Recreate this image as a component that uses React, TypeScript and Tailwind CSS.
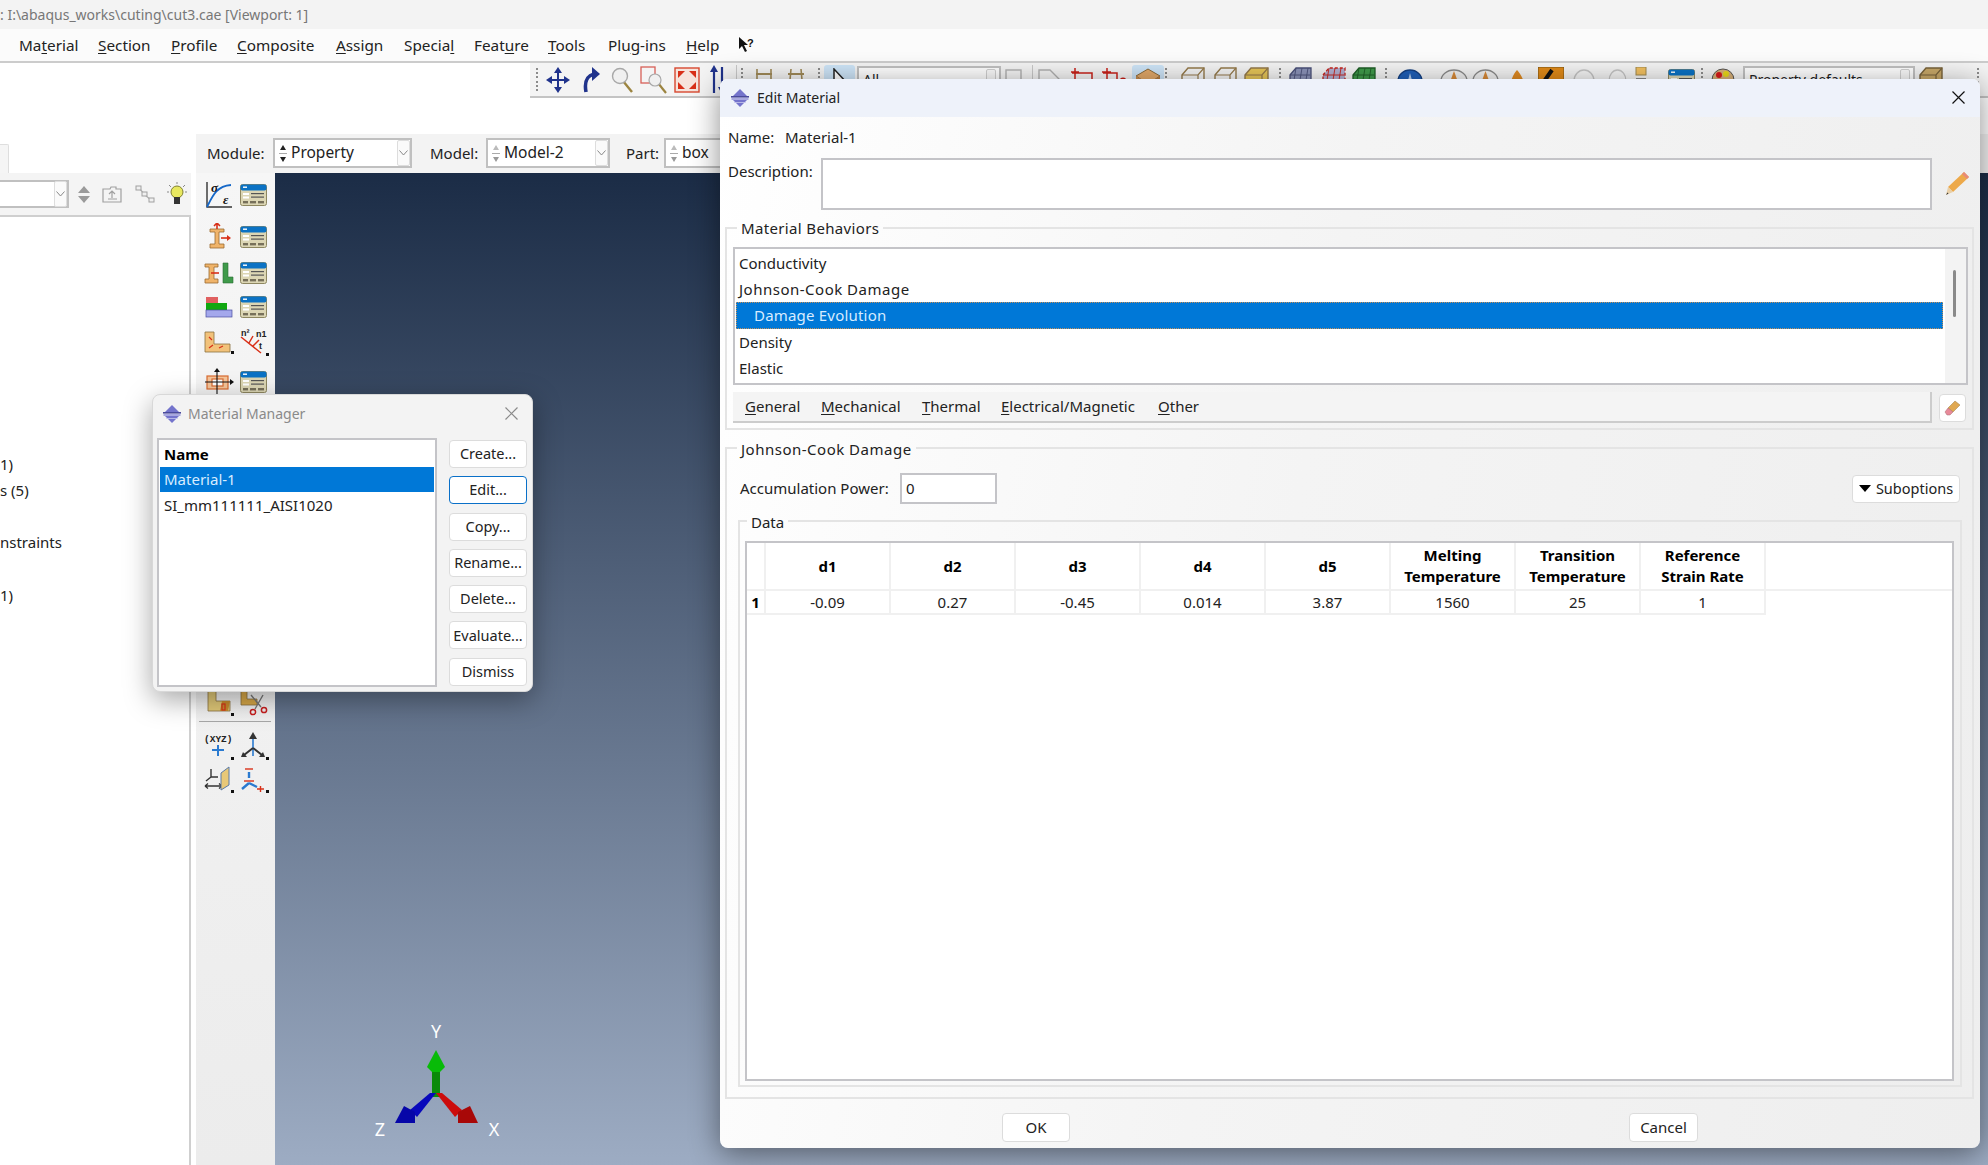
import React from 'react';

const Svg: React.FC<{ w: number; h: number; className?: string; children: React.ReactNode }> = ({ w, h, className, children }) => (
  <svg width={w} height={h} viewBox={`0 0 ${w} ${h}`} className={`shrink-0 ${className ?? ''}`}>
    {children}
  </svg>
);

const Grip: React.FC<{ className?: string }> = ({ className }) => (
  <div className={`flex h-[24px] w-[2px] shrink-0 flex-col justify-between ${className ?? ''}`}>
    {[0, 1, 2, 3, 4, 5].map((i) => (
      <span key={i} className="h-[2px] w-[2px] bg-[#8c8c8c]" />
    ))}
  </div>
);

const Divider: React.FC<{ className?: string }> = ({ className }) => (
  <div className={`h-[30px] w-px shrink-0 bg-[#c8c8c8] ${className ?? ''}`} />
);

const AbaqusIcon: React.FC = () => (
  <Svg w={18} h={18}>
    <polygon points="9,0 16,7 2,7" fill="#7474cc" />
    <polygon points="2,11 16,11 9,18" fill="#7474cc" />
    <rect x="0" y="7" width="18" height="1.6" fill="#4a4a9c" />
    <rect x="0.5" y="9" width="17" height="2" fill="#a8a8e0" />
    <rect x="3" y="13" width="12" height="0.8" fill="#c8c8ee" />
  </Svg>
);

const TableIcon: React.FC = () => (
  <Svg w={27} h={22}>
    <rect x="0.5" y="0.5" width="26" height="21" rx="2" fill="#dcd6b4" stroke="#8e8760" />
    <rect x="0.5" y="0.5" width="26" height="6" rx="2" fill="#0b72c4" />
    <rect x="3" y="2.5" width="4" height="1.4" fill="#fff" />
    <rect x="3" y="9" width="6" height="2" fill="#fff" />
    <rect x="11" y="9" width="13" height="1.2" fill="#555" />
    <rect x="3" y="12.5" width="6" height="2" fill="#fff" />
    <rect x="11" y="12.5" width="13" height="1.2" fill="#555" />
    <rect x="3" y="17" width="5" height="2.4" fill="#77705a" />
    <rect x="10" y="17" width="6" height="2.4" fill="#77705a" />
    <rect x="18" y="17" width="6" height="2.4" fill="#77705a" />
  </Svg>
);

const StressIcon: React.FC = () => (
  <Svg w={28} h={28}>
    <path d="M2 1 V26 H27" fill="none" stroke="#333" strokeWidth="1.4" />
    <path d="M2 26 C8 14 12 5 26 4" fill="none" stroke="#1668c8" strokeWidth="1.8" />
    <text x="6" y="11" fontSize="13" fontStyle="italic" fontWeight="700" fill="#111" fontFamily="Liberation Serif, serif">σ</text>
    <text x="18" y="23" fontSize="13" fontStyle="italic" fontWeight="700" fill="#111" fontFamily="Liberation Serif, serif">ε</text>
  </Svg>
);

const BeamArrowIcon: React.FC = () => (
  <Svg w={24} h={28}>
    <path d="M3 6 H17 V9 H12 V21 H17 V25 H3 V21 H8 V9 H3 Z" fill="#f0b46a" stroke="#9a6a30" strokeWidth="0.8" />
    <path d="M10 0 V6 M7 3 L10 0 L13 3" fill="none" stroke="#d83018" strokeWidth="1.6" />
    <path d="M14 15 H21" stroke="#d83018" strokeWidth="1.6" />
    <polygon points="24,15 20,12 20,18" fill="#d83018" />
  </Svg>
);

const BeamLIcon: React.FC = () => (
  <Svg w={30} h={24}>
    <path d="M1 3 H14 V6 H10 V18 H14 V22 H1 V18 H5 V6 H1 Z" fill="#f0b46a" stroke="#9a6a30" strokeWidth="0.8" />
    <path d="M7 12 H15" stroke="#d83018" strokeWidth="1.6" />
    <path d="M19 2 H24 V16 H29 V22 H19 Z" fill="#3f9a4a" stroke="#2a6c32" strokeWidth="0.6" />
  </Svg>
);

const LayersIcon: React.FC = () => (
  <Svg w={28} h={22}>
    <rect x="1" y="1" width="12" height="6" fill="#e06060" />
    <rect x="1" y="7" width="21" height="7" fill="#10a810" />
    <rect x="1" y="14" width="26" height="7" fill="#a4a8ec" stroke="#4a4ea0" strokeWidth="0.7" />
  </Svg>
);

const CornerIcon: React.FC = () => (
  <Svg w={30} h={24}>
    <path d="M1 2 H10 V14 H26 V22 H1 Z" fill="#f2c27a" stroke="#8b7240" strokeWidth="0.8" />
    <path d="M5 7 L8 10 M5 18 L9 15 M15 18 L19 16" stroke="#d83018" strokeWidth="1.2" />
    <rect x="27" y="21" width="3" height="3" fill="#111" />
  </Svg>
);

const NormalsIcon: React.FC = () => (
  <Svg w={30} h={28}>
    <text x="2" y="8" fontSize="9" fontWeight="700" fill="#222" fontFamily="Liberation Sans, sans-serif">n²</text>
    <text x="17" y="9" fontSize="9" fontWeight="700" fill="#222" fontFamily="Liberation Sans, sans-serif">n1</text>
    <path d="M2 9 L22 25 M10 15 L14 8 M14 18 L20 12" stroke="#d83018" strokeWidth="1.5" />
    <text x="20" y="21" fontSize="9" fontWeight="700" fill="#222" fontFamily="Liberation Sans, sans-serif">t</text>
    <rect x="27" y="25" width="3" height="3" fill="#111" />
  </Svg>
);

const CrossSectionIcon: React.FC = () => (
  <Svg w={30} h={28}>
    <rect x="3" y="8" width="21" height="13" fill="#f6c59a" stroke="#d86a30" strokeWidth="1.2" />
    <rect x="8" y="11" width="11" height="7" fill="#fff" stroke="#d86a30" strokeWidth="1.2" />
    <path d="M13 3 V27 M1 14 H27" stroke="#111" strokeWidth="1.1" />
    <polygon points="13,0 10,4 16,4" fill="#111" />
    <polygon points="30,14 26,11 26,17" fill="#111" />
  </Svg>
);

const AssignCutIcon: React.FC = () => (
  <Svg w={30} h={28}>
    <path d="M4 0 H12 V12 H26 V22 H4 Z" fill="#e0c878" stroke="#8b7240" strokeWidth="0.8" />
    <path d="M18 12 L26 12 L24 22 L16 22 Z" fill="#c88a2c" />
    <rect x="18" y="15" width="3" height="6" fill="none" stroke="#d83018" strokeWidth="1.2" />
    <rect x="27" y="24" width="3" height="3" fill="#111" />
  </Svg>
);

const ScissorsIcon: React.FC = () => (
  <Svg w={30} h={28}>
    <path d="M2 0 H8 V10 H18 V16 H2 Z" fill="#d8a848" stroke="#8b7240" strokeWidth="0.8" />
    <path d="M12 6 L22 18 M24 6 L16 20" stroke="#777" strokeWidth="1.4" />
    <circle cx="14" cy="23" r="2.6" fill="none" stroke="#c81e1e" strokeWidth="1.5" />
    <circle cx="25" cy="21" r="2.6" fill="none" stroke="#c81e1e" strokeWidth="1.5" />
  </Svg>
);

const CsysXyzIcon: React.FC = () => (
  <Svg w={30} h={28}>
    <text x="0" y="10" fontSize="9.5" fontWeight="700" fill="#222" fontFamily="Liberation Mono, monospace">(XYZ)</text>
    <path d="M14 13 V24 M8 18 H20" stroke="#2a7ad0" strokeWidth="2" />
    <rect x="27" y="25" width="3" height="3" fill="#111" />
  </Svg>
);

const TriadIcon: React.FC = () => (
  <Svg w={30} h={28}>
    <path d="M14 3 V24" stroke="#2a7ad0" strokeWidth="1.6" />
    <polygon points="14,0 10,7 18,7" fill="#333" />
    <path d="M14 16 L5 23 M14 16 L23 23" stroke="#333" strokeWidth="2" />
    <polygon points="2,25 8,25 4,20" fill="#333" />
    <polygon points="26,25 20,25 24,20" fill="#333" />
    <rect x="27" y="25" width="3" height="3" fill="#111" />
  </Svg>
);

const AxisPlaneIcon: React.FC = () => (
  <Svg w={30} h={28}>
    <path d="M7 4 V12 M7 12 H14 M7 12 L2 16" stroke="#333" strokeWidth="1.4" />
    <path d="M1 21 H18 M1 21 L4 18.5 M1 21 L4 23.5 M18 21 L15 18.5 M18 21 L15 23.5" fill="none" stroke="#333" strokeWidth="1.3" />
    <polygon points="17,8 25,2 25,20 17,25" fill="#e8c878" stroke="#5a7aa8" strokeWidth="1" />
    <rect x="27" y="25" width="3" height="3" fill="#111" />
  </Svg>
);

const ConstraintIcon: React.FC = () => (
  <Svg w={30} h={28}>
    <path d="M6 4 H14" stroke="#d83018" strokeWidth="1.4" />
    <path d="M10 7 V13" stroke="#2a7ad0" strokeWidth="2.4" />
    <path d="M5 16 H15" stroke="#d83018" strokeWidth="1.4" />
    <path d="M10 18 L3 24 M10 18 L18 22" stroke="#2a7ad0" strokeWidth="2.4" />
    <path d="M18 24 H25 M21.5 21 V27" stroke="#d83018" strokeWidth="1.4" />
    <rect x="27" y="25" width="3" height="3" fill="#111" />
  </Svg>
);

const MoveIcon: React.FC = () => (
  <Svg w={24} h={26}>
    <path d="M12 3 V23 M2 13 H22" stroke="#20338c" strokeWidth="2" />
    <polygon points="12,0 8,6 16,6" fill="#20338c" />
    <polygon points="12,26 8,20 16,20" fill="#20338c" />
    <polygon points="0,13 6,9 6,17" fill="#20338c" />
    <polygon points="24,13 18,9 18,17" fill="#20338c" />
  </Svg>
);

const RotateIcon: React.FC = () => (
  <Svg w={18} h={26}>
    <path d="M4 25 C2 14 5 9 12 7" fill="none" stroke="#20338c" strokeWidth="3.6" />
    <polygon points="10,0 18,7 10,14" fill="#20338c" />
  </Svg>
);

const ZoomIcon: React.FC = () => (
  <Svg w={22} h={26}>
    <line x1="12" y1="14" x2="21" y2="25" stroke="#9c8440" strokeWidth="2.4" />
    <circle cx="9" cy="9" r="7.5" fill="#f0f0f0" stroke="#a8a8a8" strokeWidth="1.4" />
  </Svg>
);

const BoxZoomIcon: React.FC = () => (
  <Svg w={27} h={28}>
    <rect x="1" y="1" width="14" height="16" fill="none" stroke="#d86058" strokeWidth="1.3" />
    <line x1="18" y1="17" x2="26" y2="27" stroke="#9c8440" strokeWidth="2.2" />
    <circle cx="15" cy="14" r="6" fill="#f0f0f0" stroke="#a8a8a8" strokeWidth="1.2" />
  </Svg>
);

const FitIcon: React.FC = () => (
  <Svg w={26} h={26}>
    <rect x="1" y="1" width="24" height="24" fill="#f6e4dc" stroke="#d84830" strokeWidth="1.4" />
    <polygon points="4,4 11,4 4,11" fill="#d83018" />
    <polygon points="22,4 15,4 22,11" fill="#d83018" />
    <polygon points="4,22 11,22 4,15" fill="#d83018" />
    <polygon points="22,22 15,22 22,15" fill="#d83018" />
  </Svg>
);

const FlipIcon: React.FC = () => (
  <Svg w={16} h={30}>
    <path d="M4 5 V28" stroke="#20338c" strokeWidth="2.2" />
    <polygon points="4,0 0,7 8,7" fill="#20338c" />
    <path d="M12 2 V24" stroke="#20338c" strokeWidth="2.2" />
    <polygon points="12,29 8,22 16,22" fill="#20338c" />
  </Svg>
);

const LadderIcon: React.FC<{ narrow?: boolean }> = ({ narrow }) => (
  <Svg w={18} h={24}>
    <path d={narrow ? 'M4 1 L2 23 M14 1 L16 23' : 'M2 1 V23 M16 1 V23'} stroke="#a08a58" strokeWidth="1.6" />
    <path d="M1 6 H17 M1 12 H17" stroke="#a08a58" strokeWidth="2" />
  </Svg>
);

const SolidBox: React.FC<{ w: number; fill: string; stroke: string }> = ({ w, fill, stroke }) => (
  <Svg w={w} h={26}>
    <path d={`M1 8 L7 1 H${w - 1} V18 L${w - 7} 25 H1 Z`} fill={fill} stroke={stroke} strokeWidth="1.4" />
    <path d={`M1 8 H${w - 7} L${w - 1} 1 M${w - 7} 8 V25`} fill="none" stroke={stroke} strokeWidth="1.2" />
  </Svg>
);

const MeshBox: React.FC<{ w: number; fill: string; stroke: string; dash?: boolean }> = ({ w, fill, stroke, dash }) => (
  <Svg w={w} h={26}>
    <path d={`M1 8 L7 1 H${w - 1} V18 L${w - 7} 25 H1 Z`} fill={fill} stroke={stroke} strokeWidth="1.3" strokeDasharray={dash ? '3 2' : undefined} />
    <path d={`M7 1 L3 25 M13 1 L9 25 M19 1 L15 25 M1 8 H${w - 2} M1 14 H${w - 2}`} stroke={stroke} strokeWidth="0.9" />
  </Svg>
);

// gray rimmed disc with an orange wedge, as in the visualization group of the toolbar
const Wedge: React.FC<{ w: number }> = ({ w }) => (
  <Svg w={w} h={24}>
    <ellipse cx={w / 2} cy="13" rx={w / 2 - 1} ry="11" fill="#f0f0f0" stroke="#8a8a8a" strokeWidth="1.3" />
    <polygon points={`${w / 2},3 ${w / 2 + 7},22 ${w / 2 - 7},22`} fill="#d88a38" />
  </Svg>
);

const Ring: React.FC<{ w: number }> = ({ w }) => (
  <Svg w={w} h={24}>
    <ellipse cx={w / 2} cy="13" rx={w / 2 - 1} ry="11" fill="none" stroke="#c4c4c4" strokeWidth="1.3" />
  </Svg>
);

const MiniCombo: React.FC<{ className: string; text: string }> = ({ className, text }) => (
  <div className={`flex h-[27px] shrink-0 items-center justify-between border-2 border-[#c0c0c0] bg-white pl-[4px] pr-[3px] text-[14px] text-[#222] ${className}`}>
    <span className="leading-none">{text}</span>
    <span className="h-[22px] w-[10px] rounded-[2px] border border-[#d0d0d0] bg-[#fafafa]" />
  </div>
);

const Toolbar: React.FC = () => (
  <div className="ml-[530px] flex h-[35px] items-center overflow-hidden border-b-2 border-[#c4c4c4] bg-[#f4f4f4]">
    <Grip className="ml-[6px]" />
    <div className="ml-[8px]"><MoveIcon /></div>
    <div className="ml-[12px]"><RotateIcon /></div>
    <div className="ml-[11px]"><ZoomIcon /></div>
    <div className="ml-[7px]"><BoxZoomIcon /></div>
    <div className="ml-[7px]"><FitIcon /></div>
    <div className="ml-[10px]"><FlipIcon /></div>
    <Divider className="ml-[10px]" />
    <Grip className="ml-[4px]" />
    <div className="ml-[12px]"><LadderIcon /></div>
    <div className="ml-[14px]"><LadderIcon narrow /></div>
    <Grip className="ml-[13px]" />
    <div className="ml-[4px] flex h-[30px] w-[31px] shrink-0 items-start justify-center rounded-[3px] bg-[#cde4f7] pt-[3px]">
      <Svg w={18} h={22}><path d="M3 1 V20 L8 15 L16 15 Z" fill="#fff" stroke="#222" strokeWidth="1.5" /></Svg>
    </div>
    <MiniCombo className="ml-[2px] w-[144px]" text="All" />
    <div className="ml-[4px]"><Svg w={18} h={24}><rect x="1" y="2" width="15" height="15" fill="#f4f4f4" stroke="#b0b0b0" strokeWidth="1.4" /></Svg></div>
    <Divider className="ml-[9px]" />
    <div className="ml-[5px]"><Svg w={23} h={24}><path d="M1 2 H12 L21 11 V22 H10 L1 12 Z" fill="none" stroke="#b0b0b0" strokeWidth="1.4" /></Svg></div>
    <div className="ml-[10px]"><Svg w={22} h={24}><path d="M1 5 H21 V20 M4 0 V14 M0 4 H8" fill="none" stroke="#c82018" strokeWidth="1.5" /></Svg></div>
    <div className="ml-[9px]"><Svg w={26} h={24}><path d="M1 5 H15 V12 M5 0 V14 M0 4 H9" fill="none" stroke="#c82018" strokeWidth="1.5" /><circle cx="12" cy="14" r="3" fill="#c82018" /><circle cx="21" cy="13" r="3.5" fill="#c82018" /></Svg></div>
    <div className="ml-[4px] flex h-[30px] w-[32px] shrink-0 items-start justify-center rounded-[3px] bg-[#cde4f7] pt-[3px]">
      <Svg w={26} h={22}><polygon points="1,8 13,1 25,8 13,16" fill="#e2a868" stroke="#8a6a3a" /><polygon points="1,8 13,16 13,22 1,14" fill="#c88a4a" /><polygon points="25,8 13,16 13,22 25,14" fill="#b87a3a" /></Svg>
    </div>
    <Grip className="ml-[1px]" />
    <div className="ml-[14px]"><SolidBox w={24} fill="none" stroke="#94794a" /></div>
    <div className="ml-[9px]"><SolidBox w={23} fill="none" stroke="#94794a" /></div>
    <div className="ml-[7px]"><SolidBox w={25} fill="#e6c558" stroke="#94794a" /></div>
    <Grip className="ml-[10px]" />
    <div className="ml-[8px]"><MeshBox w={23} fill="#8b93b8" stroke="#4a5078" /></div>
    <div className="ml-[10px]"><MeshBox w={24} fill="#b4b0d0" stroke="#c82018" dash /></div>
    <div className="ml-[6px]"><MeshBox w={24} fill="#3f9a4a" stroke="#1e5e26" /></div>
    <Grip className="ml-[9px]" />
    <div className="ml-[10px]">
      <Svg w={26} h={24}>
        <ellipse cx="13" cy="13" rx="12" ry="11" fill="#2060b8" stroke="#143f80" strokeWidth="1.3" />
        <path d="M13 5 L10 16 H16 Z" fill="#b8d0f0" />
      </Svg>
    </div>
    <div className="ml-[17px]"><Wedge w={28} /></div>
    <div className="ml-[4px]"><Wedge w={27} /></div>
    <div className="ml-[10px]"><Svg w={17} h={24}><path d="M8 2 C12 6 16 14 16 22 H1 C1 14 4 6 8 2 Z" fill="#e08a20" /></Svg></div>
    <div className="ml-[12px]"><Svg w={26} h={26}><rect x="0" y="0" width="26" height="26" fill="#e08a18" stroke="#7a5414" /><path d="M14 3 L7 13 L14 22" fill="none" stroke="#111" strokeWidth="4" /></Svg></div>
    <div className="ml-[9px]"><Ring w={22} /></div>
    <div className="ml-[13px]"><Ring w={19} /></div>
    <div className="ml-[8px]"><Svg w={12} h={26}><rect x="1" y="0" width="10" height="8" fill="#f2c060" stroke="#a08a50" /><rect x="1" y="11" width="10" height="3" fill="#888" /></Svg></div>
    <div className="ml-[21px]"><TableIcon /></div>
    <Grip className="ml-[6px]" />
    <div className="ml-[8px]"><Svg w={25} h={24}><circle cx="12" cy="12" r="11" fill="#d8b078" stroke="#555" /><circle cx="8" cy="7" r="3" fill="#d81818" /><circle cx="15" cy="6" r="3" fill="#e8d818" /></Svg></div>
    <MiniCombo className="ml-[7px] w-[172px]" text="Property defaults" />
    <div className="ml-[4px]"><SolidBox w={24} fill="#c8a868" stroke="#77623a" /></div>
    <div className="ml-[8px] h-[2px] w-[8px] shrink-0 bg-[#333]" />
    <Grip className="ml-[18px]" />
  </div>
);

const Under: React.FC<{ a?: string; u: string; b?: string }> = ({ a, u, b }) => (
  <span>
    {a}
    <span className="underline underline-offset-2">{u}</span>
    {b}
  </span>
);

const Spin: React.FC<{ dim?: boolean }> = ({ dim }) => (
  <div className="flex h-full w-[11px] shrink-0 flex-col items-center justify-center gap-[3px]">
    <span className={`h-0 w-0 border-x-[3.5px] border-b-[5px] border-x-transparent ${dim ? 'border-b-[#bbbbbb]' : 'border-b-[#222222]'}`} />
    <span className="h-px w-[8px] bg-[#aaaaaa]" />
    <span className={`h-0 w-0 border-x-[3.5px] border-t-[5px] border-x-transparent ${dim ? 'border-t-[#999999]' : 'border-t-[#222222]'}`} />
  </div>
);

const Chevron: React.FC = () => (
  <div className="flex h-[26px] w-[13px] shrink-0 items-center justify-center rounded-[2px] border border-[#dddddd] bg-[#fafafa]">
    <Svg w={9} h={6}><path d="M0.5 0.5 L4.5 5 L8.5 0.5" fill="none" stroke="#888" strokeWidth="1" /></Svg>
  </div>
);

const Combo: React.FC<{ className: string; text: string; dim?: boolean }> = ({ className, text, dim }) => (
  <div className={`flex h-[30px] shrink-0 items-center border-2 border-[#c0c0c0] bg-white pl-[2px] ${className}`}>
    <Spin dim={dim} />
    <span className="ml-[3px] flex-1 text-[15.5px] text-[#222]">{text}</span>
    <Chevron />
  </div>
);

const ModuleBar: React.FC = () => (
  <div className="flex h-[39px] items-center bg-[#f3f3f3] pb-[1px] pl-[11px] text-[15px] text-[#222]">
    <span className="w-[66px] shrink-0">Module:</span>
    <Combo className="w-[139px]" text="Property" />
    <span className="ml-[18px] w-[56px] shrink-0">Model:</span>
    <Combo className="w-[124px]" text="Model-2" dim />
    <span className="ml-[16px] w-[38px] shrink-0">Part:</span>
    <Combo className="w-[120px]" text="box" dim />
  </div>
);

const ToolRow: React.FC<{ className: string; left: React.ReactNode; right: React.ReactNode }> = ({ className, left, right }) => (
  <div className={`flex h-[28px] items-center ${className}`}>
    <div className="flex w-[42px] justify-center pl-[3px]">{left}</div>
    <div className="flex w-[31px] justify-center">{right}</div>
  </div>
);

const IconColumn: React.FC = () => (
  <div className="flex w-[79px] shrink-0 flex-col bg-[linear-gradient(180deg,#f6f6f6,#ececec)] pt-[8px]">
    <ToolRow className="" left={<StressIcon />} right={<TableIcon />} />
    <ToolRow className="mt-[14px]" left={<BeamArrowIcon />} right={<TableIcon />} />
    <ToolRow className="mt-[8px]" left={<BeamLIcon />} right={<TableIcon />} />
    <ToolRow className="mt-[6px]" left={<LayersIcon />} right={<TableIcon />} />
    <ToolRow className="mt-[7px]" left={<CornerIcon />} right={<NormalsIcon />} />
    <ToolRow className="mt-[12px]" left={<CrossSectionIcon />} right={<TableIcon />} />
    <ToolRow className="mt-[293px]" left={<AssignCutIcon />} right={<ScissorsIcon />} />
    <div className="ml-[3px] mt-[4px] h-px w-[72px] bg-[#a8a8a8]" />
    <ToolRow className="mt-[10px]" left={<CsysXyzIcon />} right={<TriadIcon />} />
    <ToolRow className="mt-[5px]" left={<AxisPlaneIcon />} right={<ConstraintIcon />} />
  </div>
);

const LeftPanel: React.FC = () => (
  <div className="flex w-[191px] shrink-0 flex-col">
    <div className="h-[46px]" />
    <div className="h-[29px] w-[9px] rounded-tr-[2px] border-r border-t border-[#dedede] bg-[#f5f5f5]" />
    <div className="flex h-[42px] items-center bg-[#f4f4f4]">
      <div className="flex h-[28px] w-[69px] shrink-0 items-center justify-end border-2 border-l-0 border-[#c0c0c0] bg-white">
        <Chevron />
      </div>
      <div className="ml-[9px] flex flex-col gap-[3px]">
        <span className="h-0 w-0 border-x-[6px] border-b-[7px] border-x-transparent border-b-[#9a9a9a]" />
        <span className="h-0 w-0 border-x-[6px] border-t-[7px] border-x-transparent border-t-[#9a9a9a]" />
      </div>
      <div className="ml-[12px]">
        <Svg w={20} h={18}><path d="M1 4 H8 L9 2 H14 V4 H19 V17 H1 Z" fill="none" stroke="#a0a0a0" strokeWidth="1.2" /><path d="M10 6 V13 M7 9 L10 6 L13 9 M6 14 H15" fill="none" stroke="#a0a0a0" strokeWidth="1.2" /></Svg>
      </div>
      <div className="ml-[13px]">
        <Svg w={20} h={18}><path d="M4 3 L10 10 L16 15" fill="none" stroke="#b0b0b0" strokeWidth="1.2" /><rect x="1" y="1" width="5" height="4" fill="#f0f0f0" stroke="#a0a0a0" /><rect x="7" y="7" width="5" height="4" fill="#f0f0f0" stroke="#a0a0a0" /><rect x="14" y="13" width="5" height="4" fill="#f0f0f0" stroke="#a0a0a0" /></Svg>
      </div>
      <div className="ml-[12px]">
        <Svg w={20} h={24}><path d="M10 0 V2 M2 3 L4 5 M18 3 L16 5 M0 10 H2 M18 10 H20" stroke="#888" strokeWidth="1" /><circle cx="10" cy="10" r="6" fill="#e8e860" stroke="#808030" /><rect x="7" y="15" width="6" height="7" fill="#333" /></Svg>
      </div>
    </div>
    <div className="flex-1 border-r-2 border-t-2 border-[#cfcfcf] bg-white text-[15px] leading-[20px] text-[#222]">
      <div className="mt-[237px]">1)</div>
      <div className="mt-[6px]">s (5)</div>
      <div className="mt-[32px]">nstraints</div>
      <div className="mt-[33px]">1)</div>
    </div>
  </div>
);

const Triad: React.FC = () => (
  <svg width={140} height={125} viewBox="0 0 140 125" className="absolute left-[95px] top-[847px]">
    <rect x="62" y="45" width="8" height="32" fill="#0a8a0a" />
    <polygon points="66,30 75,47 70,52 62,52 57,47" fill="#08bb08" />
    <polygon points="66,73 72,73 92,90 85,97" fill="#cc0c0c" />
    <polygon points="88,103 108,103 100,86 88,92" fill="#a80808" />
    <polygon points="66,73 60,73 40,90 47,97" fill="#0808bb" />
    <polygon points="25,103 45,103 45,92 34,86" fill="#0606a8" />
    <text x="66" y="18" textAnchor="middle" fontSize="18" fill="#fff" fontFamily="Noto Sans, sans-serif">Y</text>
    <text x="10" y="116" textAnchor="middle" fontSize="18" fill="#fff" fontFamily="Noto Sans, sans-serif">Z</text>
    <text x="124" y="116" textAnchor="middle" fontSize="18" fill="#fff" fontFamily="Noto Sans, sans-serif">X</text>
  </svg>
);

const CloseX: React.FC<{ color: string }> = ({ color }) => (
  <Svg w={13} h={13}><path d="M0.5 0.5 L12.5 12.5 M12.5 0.5 L0.5 12.5" stroke={color} strokeWidth="1.2" /></Svg>
);

const managerButtons = ['Create...', 'Edit...', 'Copy...', 'Rename...', 'Delete...', 'Evaluate...', 'Dismiss'];

const MaterialManager: React.FC = () => (
  <div className="absolute left-[152px] top-[394px] flex h-[298px] w-[381px] flex-col rounded-[8px] border border-[#d8d8d8] bg-[#f3f3f3] shadow-[0_8px_28px_rgba(0,0,0,0.35)]">
    <div className="flex h-[37px] shrink-0 items-center pl-[10px] pr-[14px]">
      <AbaqusIcon />
      <span className="ml-[7px] flex-1 text-[14px] text-[#8a8a8a]">Material Manager</span>
      <CloseX color="#8a8a8a" />
    </div>
    <div className="flex pl-[4px] pt-[6px]">
      <div className="h-[249px] w-[280px] shrink-0 border-2 border-[#c4c4c8] bg-white p-px text-[15px] text-[#222]">
        <div className="flex h-[26px] items-center pl-[4px] font-bold text-black">Name</div>
        <div className="flex h-[25px] items-center bg-[#0078d7] pl-[4px] text-[#d8ecff]">Material-1</div>
        <div className="flex h-[26px] items-center pl-[4px]">SI_mm111111_AISI1020</div>
      </div>
      <div className="ml-[12px] flex w-[78px] shrink-0 flex-col gap-[8.3px] pt-[2px]">
        {managerButtons.map((b) => (
          <button
            key={b}
            className={`flex h-[28px] items-center justify-center rounded-[4px] border bg-white text-[14.5px] text-[#222] ${b === 'Edit...' ? 'border-[#0a70c8]' : 'border-[#dcdcdc]'}`}
          >
            {b}
          </button>
        ))}
      </div>
    </div>
  </div>
);

const behaviors = ['Conductivity', 'Johnson-Cook Damage', 'Damage Evolution', 'Density', 'Elastic'];

const BehaviorList: React.FC = () => (
  <div className="ml-[6px] flex h-[138px] w-[1235px] shrink-0 border-2 border-[#c4c4c8] bg-white pl-px">
    <div className="flex-1 pt-[1px]">
      {behaviors.map((b) =>
        b === 'Damage Evolution' ? (
          <div key={b} className="flex h-[27px] items-center border border-dotted border-[#c4905a] bg-[#0078d7] pl-[17px] tracking-[0.2px] text-[#d8ecff]">
            {b}
          </div>
        ) : (
          <div key={b} className={`flex h-[26px] items-center pl-[3px] text-[#222] ${b === 'Johnson-Cook Damage' ? 'tracking-[0.5px]' : ''}`}>
            {b}
          </div>
        ),
      )}
    </div>
    <div className="ml-[2px] w-[21px] shrink-0 bg-[#f3f3f3] pl-[8px] pt-[21px]">
      <div className="h-[47px] w-[3px] rounded-[2px] bg-[#8a8a8a]" />
    </div>
  </div>
);

const SubMenu: React.FC = () => (
  <div className="ml-[6px] mt-[7px] flex items-center">
    <div className="flex h-[31px] w-[1199px] shrink-0 items-center border-b-2 border-r-2 border-[#cccccc] bg-[#f4f4f4] pl-[12px] text-[#222]">
      <div className="w-[76px]"><Under u="G" b="eneral" /></div>
      <div className="w-[101px]"><Under u="M" b="echanical" /></div>
      <div className="w-[79px]"><Under u="T" b="hermal" /></div>
      <div className="w-[157px]"><Under u="E" b="lectrical/Magnetic" /></div>
      <div><Under u="O" b="ther" /></div>
    </div>
    <button className="ml-[7px] flex h-[28px] w-[27px] items-center justify-center rounded-[4px] border border-[#dcdcdc] bg-white">
      <Svg w={17} h={16}>
        <polygon points="11,1 16,5 9,12 4,8" fill="#e0a850" stroke="#9a7a40" strokeWidth="0.5" />
        <polygon points="4,8 9,12 6,15 3,15 1,12" fill="#e88a9a" stroke="#a86a70" strokeWidth="0.5" />
      </Svg>
    </button>
  </div>
);

const columns = [
  { head: ['d1'], value: '-0.09' },
  { head: ['d2'], value: '0.27' },
  { head: ['d3'], value: '-0.45' },
  { head: ['d4'], value: '0.014' },
  { head: ['d5'], value: '3.87' },
  { head: ['Melting', 'Temperature'], value: '1560' },
  { head: ['Transition', 'Temperature'], value: '25' },
  { head: ['Reference', 'Strain Rate'], value: '1' },
];

const DataTable: React.FC = () => (
  <div className="ml-[5px] h-[540px] w-[1209px] border-2 border-[#c4c4c8] bg-white">
    <div className="flex h-[48px] border-b-2 border-[#f0f0f0]">
      <div className="w-[19px] shrink-0 border-r-2 border-[#f0f0f0]" />
      {columns.map((c) => (
        <div key={c.head[0]} className="flex w-[125px] shrink-0 flex-col items-center justify-center border-r-2 border-[#f0f0f0] text-[15px] font-bold leading-[21px] text-black">
          {c.head.map((h) => (
            <span key={h}>{h}</span>
          ))}
        </div>
      ))}
    </div>
    <div className="flex h-[24px] text-[15px] text-[#222]">
      <div className="flex w-[19px] shrink-0 items-center justify-center border-b-2 border-r-2 border-[#f0f0f0] font-bold text-black">1</div>
      {columns.map((c) => (
        <div key={c.head[0]} className="flex w-[125px] shrink-0 items-center justify-center border-b-2 border-r-2 border-[#f0f0f0]">
          {c.value}
        </div>
      ))}
    </div>
  </div>
);

const EditMaterial: React.FC = () => (
  <div className="absolute left-[720px] top-[79px] flex h-[1069px] w-[1260px] flex-col overflow-hidden rounded-[8px] bg-[linear-gradient(100deg,#ffffff,#f4f4f4_45%,#eeeeee)] text-[15px] shadow-[0_6px_30px_rgba(0,0,0,0.45)]">
    <div className="flex h-[38px] shrink-0 items-center bg-[#eef2fa] pb-[1px] pl-[11px] pr-[15px]">
      <AbaqusIcon />
      <span className="ml-[8px] flex-1 text-[14px] text-[#222]">Edit Material</span>
      <CloseX color="#111" />
    </div>
    <div className="ml-[8px] mt-[9px] flex h-[22px] items-center text-[#222]">
      <span className="w-[57px]">Name:</span>
      <span>Material-1</span>
    </div>
    <div className="mt-[10px] flex">
      <div className="w-[101px] shrink-0 pl-[8px] pt-[2px] text-[#222]">Description:</div>
      <div className="h-[52px] w-[1111px] shrink-0 border-2 border-[#c4c4c8] bg-white" />
      <div className="ml-[13px] pt-[13px]">
        <Svg w={25} h={25}>
          <polygon points="19,1 24,6 8,21 3,16" fill="#eda94a" />
          <polygon points="19,1 24,6 22,8 17,3" fill="#e88a78" />
          <polygon points="3,16 8,21 1,24" fill="#e8cfa8" />
          <polygon points="2.5,21.5 3.5,22.5 1,24" fill="#333" />
        </Svg>
      </div>
    </div>
    <fieldset className="ml-[5px] mt-[8px] h-[212px] w-[1249px] shrink-0 border-2 border-[#e4e4e4]">
      <legend className="ml-[10px] px-[4px] leading-[20px] tracking-[0.35px] text-[#222]">Material Behaviors</legend>
      <div className="pt-[9px]">
        <BehaviorList />
        <SubMenu />
      </div>
    </fieldset>
    <fieldset className="ml-[5px] mt-[8px] h-[661px] w-[1249px] shrink-0 border-2 border-[#e4e4e4]">
      <legend className="relative top-[1px] ml-[10px] px-[4px] leading-[20px] tracking-[0.5px] text-[#222]">Johnson-Cook Damage</legend>
      <div className="mt-[15px] flex items-center pl-[13px] pr-[12px]">
        <span className="w-[160px] shrink-0 text-[#222]">Accumulation Power:</span>
        <div className="flex h-[31px] w-[97px] items-center border-2 border-[#c4c4c8] bg-white pl-[4px] text-[#222]">0</div>
        <div className="flex-1" />
        <button className="flex h-[28px] w-[108px] items-center justify-center gap-[5px] rounded-[4px] border border-[#dcdcdc] bg-white text-[14.5px] text-[#222]">
          <span className="h-0 w-0 border-x-[6px] border-t-[7px] border-x-transparent border-t-black" />
          Suboptions
        </button>
      </div>
      <fieldset className="ml-[11px] mt-[7px] h-[576px] w-[1224px] border-2 border-[#e4e4e4]">
        <legend className="relative top-[1px] ml-[7px] px-[4px] leading-[20px] text-[#222]">Data</legend>
        <div className="pt-[10px]">
          <DataTable />
        </div>
      </fieldset>
    </fieldset>
    <div className="mt-[14px] flex h-[29px] text-[#222]">
      <button className="ml-[282px] h-[29px] w-[68px] rounded-[4px] border border-[#dcdcdc] bg-white">OK</button>
      <button className="ml-[559px] h-[29px] w-[69px] rounded-[4px] border border-[#dcdcdc] bg-white">Cancel</button>
    </div>
  </div>
);

const menus = [
  { w: 'w-[79px]', a: 'Ma', u: 't', b: 'erial' },
  { w: 'w-[73px]', a: '', u: 'S', b: 'ection' },
  { w: 'w-[66px]', a: '', u: 'P', b: 'rofile' },
  { w: 'w-[99px]', a: '', u: 'C', b: 'omposite' },
  { w: 'w-[68px]', a: '', u: 'A', b: 'ssign' },
  { w: 'w-[70px]', a: 'Specia', u: 'l', b: '' },
  { w: 'w-[74px]', a: 'Feat', u: 'u', b: 're' },
  { w: 'w-[60px]', a: '', u: 'T', b: 'ools' },
  { w: 'w-[78px]', a: 'Plu', u: 'g', b: '-ins' },
  { w: 'w-[52px]', a: '', u: 'H', b: 'elp' },
];

const App: React.FC = () => (
  <div className="relative h-[1165px] w-[1988px] overflow-hidden bg-white font-['Noto_Sans','Open_Sans',sans-serif]">
    <div className="flex h-[29px] items-center bg-[#f3f3f3] text-[14px] text-[#777777]">: I:\abaqus_works\cuting\cut3.cae [Viewport: 1]</div>
    <div className="flex h-[34px] items-center border-b-2 border-[#cccccc] bg-[#fbfbfb] pl-[19px] text-[15.3px] text-[#222]">
      {menus.map((m) => (
        <div key={m.u + m.b} className={m.w}>
          <Under a={m.a} u={m.u} b={m.b} />
        </div>
      ))}
      <Svg w={16} h={16}>
        <polygon points="1,0 1,12 4,9 7,15 9,14 6,8 10,8" fill="#111" />
        <text x="9" y="10" fontSize="11" fontWeight="700" fill="#111" fontFamily="Liberation Sans, sans-serif">?</text>
      </Svg>
    </div>
    <Toolbar />
    <div className="flex h-[1068px]">
      <LeftPanel />
      <div className="flex flex-1 flex-col pl-[5px]">
        <div className="h-[36px]" />
        <ModuleBar />
        <div className="flex flex-1">
          <IconColumn />
          <div className="relative flex-1 bg-[linear-gradient(180deg,#1b2c46,#9dacc3)]">
            <Triad />
          </div>
        </div>
      </div>
    </div>
    <MaterialManager />
    <EditMaterial />
  </div>
);

export default App;
